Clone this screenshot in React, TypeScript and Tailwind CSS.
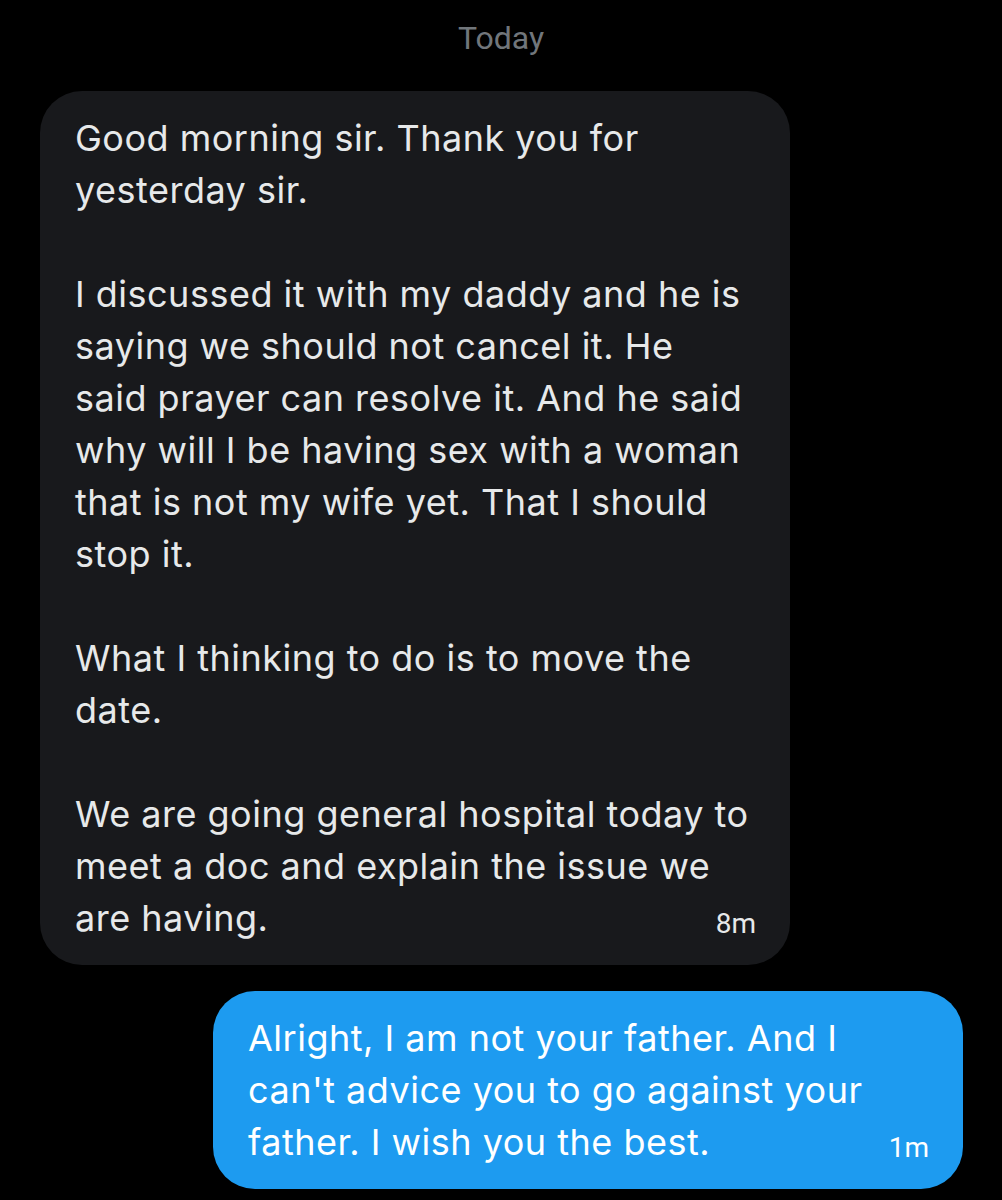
const received = [
  "Good morning sir. Thank you for",
  "yesterday sir.",
  "",
  "I discussed it with my daddy and he is",
  "saying we should not cancel it. He",
  "said prayer can resolve it. And he said",
  "why will I be having sex with a woman",
  "that is not my wife yet. That I should",
  "stop it.",
  "",
  "What I thinking to do is to move the",
  "date.",
  "",
  "We are going general hospital today to",
  "meet a doc and explain the issue we",
  "are having.",
];

const sent = [
  "Alright, I am not your father. And I",
  "can't advice you to go against your",
  "father. I wish you the best.",
];

function Bubble({ lines, time, className }: { lines: string[]; time: string; className: string }) {
  return (
    <div className={`w-[750px] rounded-[42px] pl-[35px] pr-[34px] py-[21px] ${className}`}>
      {lines.map((line, i) => {
        const last = i === lines.length - 1;
        return (
          <div key={i} className="flex h-[52px] items-center justify-between whitespace-pre">
            <span>{line || " "}</span>
            {last && <span className="mt-[12px] font-['Roboto',sans-serif] text-[28px] tracking-normal">{time}</span>}
          </div>
        );
      })}
    </div>
  );
}

export default function App() {
  return (
    <div className="min-h-[1200px] w-[1002px] bg-black font-['Inter',sans-serif] text-[36px] tracking-[0.5px]">
      <div className="flex h-[91px] items-start justify-center pt-[18px] font-['Roboto',sans-serif] text-[32px] leading-[40px] tracking-normal text-[#71767b]">
        Today
      </div>
      <div className="pl-[40px]">
        <Bubble lines={received} time="8m" className="bg-[#18191c] text-[#e7e9ea]" />
      </div>
      <div className="flex justify-end pr-[39px] pt-[26px]">
        <Bubble lines={sent} time="1m" className="bg-[#1d9bf0] text-white" />
      </div>
    </div>
  );
}
